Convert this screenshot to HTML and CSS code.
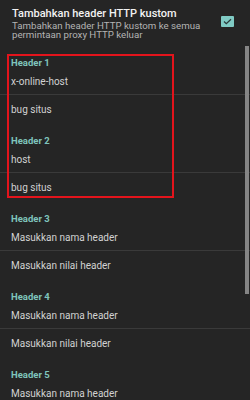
FILE: index.html
```html
<!DOCTYPE html>
<html lang="id">
<head>
    <meta charset="UTF-8">
    <meta name="viewport" content="width=device-width, initial-scale=1.0">
    <title>Header HTTP kustom</title>
    <link rel="stylesheet" href="styles.css">
</head>
<body>
    <div class="screen">
        <!-- Switch preference -->
        <div class="pref">
            <div class="pref-text">
                <div class="pref-title">Tambahkan header HTTP kustom</div>
                <div class="pref-summary">Tambahkan header HTTP kustom ke semua permintaan proxy HTTP keluar</div>
            </div>
            <div class="checkbox">
                <svg width="9" height="7" viewBox="0 0 9 7">
                    <path d="M1 3.6 L3.3 5.7 L8 1.3" fill="none" stroke="#2b3a3a" stroke-width="1.3"/>
                </svg>
            </div>
        </div>

        <!-- Header 1 -->
        <div class="group">
            <div class="cat">Header 1</div>
            <div class="item item-name">x-online-host</div>
            <div class="item item-value">bug situs</div>
        </div>

        <!-- Header 2 -->
        <div class="group">
            <div class="cat">Header 2</div>
            <div class="item item-name">host</div>
            <div class="item item-value">bug situs</div>
        </div>

        <!-- Header 3 -->
        <div class="group">
            <div class="cat">Header 3</div>
            <div class="item item-name">Masukkan nama header</div>
            <div class="item item-value">Masukkan nilai header</div>
        </div>

        <!-- Header 4 -->
        <div class="group">
            <div class="cat">Header 4</div>
            <div class="item item-name">Masukkan nama header</div>
            <div class="item item-value">Masukkan nilai header</div>
        </div>

        <!-- Header 5 -->
        <div class="group">
            <div class="cat">Header 5</div>
            <div class="item item-name">Masukkan nama header</div>
            <div class="item item-value">Masukkan nilai header</div>
        </div>

        <!-- red annotation box drawn over headers 1 and 2 -->
        <div class="highlight"></div>
        <div class="scrollbar"></div>
    </div>
</body>
</html>
```

FILE: styles.css
```css
body {
    margin: 0;
    background-color: #252525;
    font-family: Roboto, "Noto Sans", sans-serif;
    overflow: hidden;
}

.screen {
    position: relative;
    width: 250px;
    height: 400px;
    overflow: hidden;
}

.pref {
    display: flex;
    align-items: center;
    height: 52px;
    box-sizing: border-box;
    padding: 0 16px 7px 12px;
}

.pref-text {
    flex: 1;
}

.pref-title {
    font-size: 11px;
    font-weight: 500;
    line-height: 13px;
    color: #f2f2f2;
}

.pref-summary {
    margin-top: 1px;
    font-size: 9.7px;
    line-height: 9px;
    color: #b4b4b4;
}

.checkbox {
    width: 13px;
    height: 11px;
    margin-bottom: 2px;
    border-radius: 1px;
    background-color: #80cbc4;
    display: flex;
    justify-content: center;
    align-items: center;
}

.group {
    height: 78px;
}

.cat {
    height: 20px;
    line-height: 21px;
    padding-left: 11px;
    font-size: 9.5px;
    font-weight: 700;
    color: #7fc4bc;
}

.item {
    padding-left: 11px;
    font-size: 10px;
    line-height: 12px;
    color: #d2d2d2;
}

.item-name {
    height: 23px;
    box-sizing: border-box;
    padding-top: 4px;
    border-bottom: 1px solid #3a3a3a;
}

.item-value {
    padding-top: 9px;
}

.highlight {
    position: absolute;
    left: 7px;
    top: 54px;
    width: 167px;
    height: 144px;
    box-sizing: border-box;
    border: 2.5px solid #e3141c;
}

.scrollbar {
    position: absolute;
    right: 1px;
    top: 46px;
    width: 4px;
    height: 248px;
    background-color: #858585;
}
```
